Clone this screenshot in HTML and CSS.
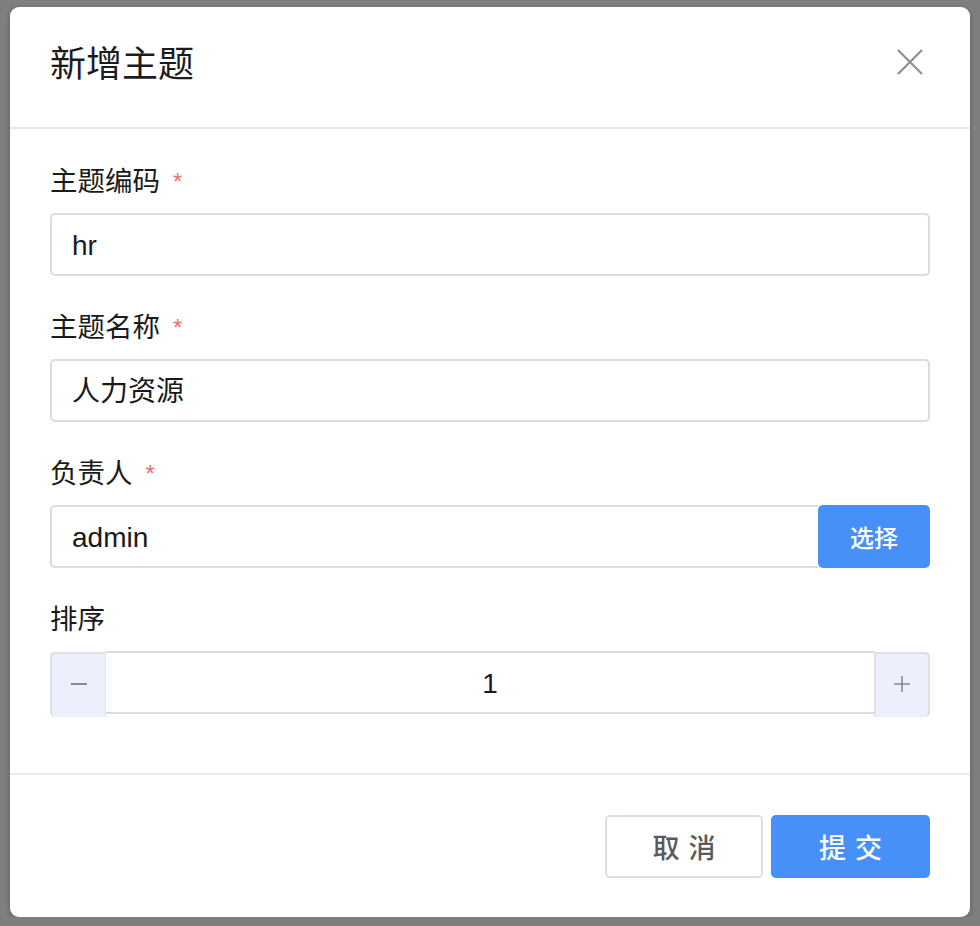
FILE: index.html
```html
<!DOCTYPE html>
<html lang="zh-CN">
<head>
<meta charset="utf-8">
<title>新增主题</title>
<link rel="stylesheet" href="styles.css">
</head>
<body>
<div class="dialog">
  <div class="dialog-header">
    <div class="dialog-title">新增主题</div>
    <button class="close" aria-label="关闭">
      <svg width="26" height="26" viewBox="0 0 26 26"><path d="M1 1 L25 25 M25 1 L1 25" stroke="#8e8e93" stroke-width="2.2" fill="none"/></svg>
    </button>
  </div>
  <div class="dialog-body">
    <div class="item">
      <div class="label">主题编码<span class="req">*</span></div>
      <div class="input">hr</div>
    </div>
    <div class="item">
      <div class="label">主题名称<span class="req">*</span></div>
      <div class="input">人力资源</div>
    </div>
    <div class="item">
      <div class="label">负责人<span class="req">*</span></div>
      <div class="group">
        <div class="input input-grow">admin</div>
        <button class="btn-select">选择</button>
      </div>
    </div>
    <div class="item">
      <div class="label">排序</div>
      <div class="num">
        <div class="num-btn num-minus"><span class="minus-line"></span></div>
        <div class="num-val">1</div>
        <div class="num-btn num-plus">
          <svg width="18" height="18" viewBox="0 0 18 18"><path d="M9 1 V17 M1 9 H17" stroke="#8a8a90" stroke-width="1.6" fill="none"/></svg>
        </div>
      </div>
    </div>
  </div>
  <div class="dialog-footer">
    <button class="btn btn-cancel"><span>取消</span></button>
    <button class="btn btn-primary"><span>提交</span></button>
  </div>
</div>
</body>
</html>
```
FILE: styles.css
```css
* { box-sizing: border-box; }
html, body { margin: 0; padding: 0; }
body {
  background: #7f7f7f;
  font-family: "Liberation Sans", "Noto Sans CJK SC", sans-serif;
  color: #222;
  padding: 7px 10px 0 10px;
}
.dialog {
  width: 960px;
  height: 910px;
  background: #fff;
  border-radius: 9px;
  box-shadow: 0 2px 6px rgba(0,0,0,0.25);
  display: flex;
  flex-direction: column;
}
.dialog-header {
  height: 122px;
  border-bottom: 2px solid #e6e6e6;
  display: flex;
  align-items: center;
  justify-content: space-between;
  padding: 0 47px 4px 40px;
}
.dialog-title {
  font-size: 36px;
  line-height: 44px;
  color: #1c1c1c;
}
.close {
  border: 0;
  background: none;
  padding: 0;
  width: 26px;
  height: 26px;
  display: flex;
  margin-top: -6px;
}
.dialog-body {
  padding: 35px 40px 25px 40px;
  border-bottom: 2px solid #ebebef;
}
.item { margin-bottom: 34px; }
.label {
  font-size: 27.5px;
  line-height: 36px;
  height: 36px;
  margin-bottom: 13px;
  color: #1a1a1a;
  display: flex;
  align-items: flex-start;
}
.req {
  color: #f56c6c;
  font-size: 24px;
  line-height: 24px;
  margin-left: 13px;
  margin-top: 6px;
}
.input {
  height: 63px;
  border: 2px solid #dcdcdc;
  border-radius: 5px;
  padding: 0 20px;
  font-size: 28px;
  line-height: 62px;
  color: #1a1a1a;
}
.group { display: flex; }
.input-grow {
  flex: 1;
  border-top-right-radius: 0;
  border-bottom-right-radius: 0;
  border-right: 0;
}
.btn-select {
  width: 112px;
  height: 63px;
  border: 0;
  border-radius: 5px;
  background: #4690f7;
  color: #fff;
  font-family: inherit;
  font-size: 24px;
  font-weight: 500;
  padding: 0;
}
.num {
  display: flex;
  align-items: flex-start;
  height: 63px;
}
.num-btn {
  width: 56px;
  height: 65px;
  margin-top: 1px;
  background: #ebf0fc;
  display: flex;
  align-items: center;
  justify-content: center;
}
.num-minus {
  border-left: 2px solid #dcdfe6;
  border-top: 2px solid #dcdfe6;
  border-right: 1px solid #e3e6ee;
  border-radius: 5px 0 0 5px;
  padding-bottom: 4px;
}
.num-plus {
  border-right: 2px solid #dcdfe6;
  border-top: 2px solid #dcdfe6;
  border-left: 2px solid #dfe2ea;
  border-radius: 0 5px 5px 0;
  padding-bottom: 4px;
}
.minus-line {
  display: block;
  width: 16px;
  height: 2px;
  background: #8a8a90;
}
.num-val {
  flex: 1;
  height: 63px;
  border-top: 2px solid #dcdcdc;
  border-bottom: 2px solid #dcdcdc;
  text-align: center;
  font-size: 28px;
  line-height: 62px;
  color: #1a1a1a;
}
.dialog-footer {
  flex: 1;
  display: flex;
  justify-content: flex-end;
  align-items: flex-start;
  gap: 8px;
  padding: 40px 40px 0 0;
}
.btn {
  height: 63px;
  border-radius: 5px;
  font-family: inherit;
  font-size: 27px;
  font-weight: 500;
  padding: 0;
  cursor: pointer;
}
.btn span {
  letter-spacing: 0.34em;
  margin-right: -0.34em;
}
.btn-cancel {
  width: 158px;
  background: #fff;
  border: 2px solid #dcdfe6;
  color: #5a5a5a;
}
.btn-primary {
  width: 159px;
  background: #4690f7;
  border: 0;
  color: #fff;
}
```
